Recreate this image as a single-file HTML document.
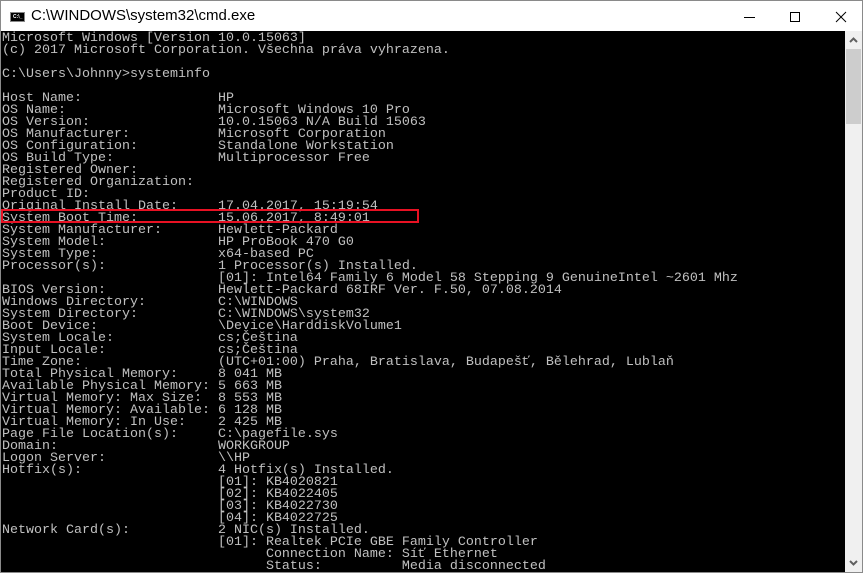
<!DOCTYPE html>
<html><head><meta charset="utf-8"><style>
html,body{margin:0;padding:0;width:863px;height:573px;overflow:hidden;background:#fff;}
#win{position:absolute;left:0;top:0;width:861px;height:571px;border:1px solid #8a8a8a;background:#fff;}
#title{position:absolute;left:0;top:0;width:861px;height:30px;background:#fff;}
#title .t{position:absolute;left:30px;top:6px;font:15px "Liberation Sans",sans-serif;color:#000;}
#icon{position:absolute;left:9px;top:11px;width:15px;height:10px;background:#000;border:1px solid #888;box-sizing:border-box;}
#icon span{position:absolute;left:2px;top:1px;font:bold 5px "Liberation Sans",sans-serif;color:#fff;}
#con{position:absolute;left:0;top:30px;width:844px;height:541px;background:#000;overflow:hidden;}
pre{margin:0;padding:2px 0 0 1px;font:13.33px/12px "Liberation Mono",monospace;color:#c0c0c0;white-space:pre;}
#sb{position:absolute;left:844px;top:30px;width:17px;height:541px;background:#f0f0f0;}
#thumb{position:absolute;left:1px;top:18px;width:15px;height:75px;background:#cdcdcd;}
#red{position:absolute;left:0;top:178px;width:414px;height:10px;border:2px solid #e81123;}
</style></head><body>
<div id="win">
<div id="title"><div id="icon"><span>C:\_</span></div><div class="t">C:\WINDOWS\system32\cmd.exe</div>
<svg style="position:absolute;left:740px;top:10px" width="110" height="14">
<line x1="3" y1="6.5" x2="14" y2="6.5" stroke="#000" stroke-width="1"/>
<rect x="49.5" y="1.5" width="9" height="9" fill="none" stroke="#000"/>
<line x1="95" y1="1" x2="105" y2="11" stroke="#000"/><line x1="105" y1="1" x2="95" y2="11" stroke="#000"/>
</svg></div>
<div id="con"><pre>Microsoft Windows [Version 10.0.15063]
(c) 2017 Microsoft Corporation. Všechna práva vyhrazena.

C:\Users\Johnny&gt;systeminfo

Host Name:                 HP
OS Name:                   Microsoft Windows 10 Pro
OS Version:                10.0.15063 N/A Build 15063
OS Manufacturer:           Microsoft Corporation
OS Configuration:          Standalone Workstation
OS Build Type:             Multiprocessor Free
Registered Owner:
Registered Organization:
Product ID:
Original Install Date:     17.04.2017, 15:19:54
System Boot Time:          15.06.2017, 8:49:01
System Manufacturer:       Hewlett-Packard
System Model:              HP ProBook 470 G0
System Type:               x64-based PC
Processor(s):              1 Processor(s) Installed.
                           [01]: Intel64 Family 6 Model 58 Stepping 9 GenuineIntel ~2601 Mhz
BIOS Version:              Hewlett-Packard 68IRF Ver. F.50, 07.08.2014
Windows Directory:         C:\WINDOWS
System Directory:          C:\WINDOWS\system32
Boot Device:               \Device\HarddiskVolume1
System Locale:             cs;Čeština
Input Locale:              cs;Čeština
Time Zone:                 (UTC+01:00) Praha, Bratislava, Budapešť, Bělehrad, Lublaň
Total Physical Memory:     8 041 MB
Available Physical Memory: 5 663 MB
Virtual Memory: Max Size:  8 553 MB
Virtual Memory: Available: 6 128 MB
Virtual Memory: In Use:    2 425 MB
Page File Location(s):     C:\pagefile.sys
Domain:                    WORKGROUP
Logon Server:              \\HP
Hotfix(s):                 4 Hotfix(s) Installed.
                           [01]: KB4020821
                           [02]: KB4022405
                           [03]: KB4022730
                           [04]: KB4022725
Network Card(s):           2 NIC(s) Installed.
                           [01]: Realtek PCIe GBE Family Controller
                                 Connection Name: Síť Ethernet
                                 Status:          Media disconnected</pre>
<div id="red"></div></div>
<div id="sb"><div id="thumb"></div>
<svg style="position:absolute;left:4px;top:6px" width="9" height="6"><polyline points="1,5 4.5,1.5 8,5" fill="none" stroke="#606060" stroke-width="2"/></svg>
<svg style="position:absolute;left:4px;top:529px" width="9" height="6"><polyline points="1,1 4.5,4.5 8,1" fill="none" stroke="#606060" stroke-width="2"/></svg>
</div>
</div>
</body></html>
